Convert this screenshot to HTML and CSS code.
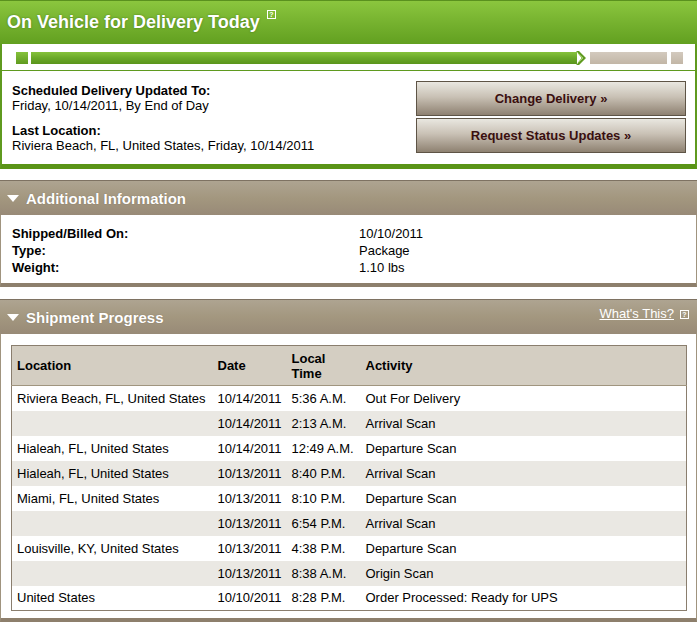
FILE: index.html
```html
<!DOCTYPE html>
<html>
<head>
<meta charset="utf-8">
<link rel="stylesheet" href="styles.css">
</head>
<body>
<div class="status">
  <div class="status-head">
    <h1 class="status-title">On Vehicle for Delivery Today</h1>
    <span class="qbox qbox-title">?</span>
  </div>
  <div class="progress">
    <span class="pg-sq pg-green"></span>
    <span class="pg-bar pg-done"></span>
    <svg class="pg-chev" width="14" height="14" viewBox="0 0 14 14">
      <path d="M0 0 L7 7 L0 14 L3 14 L10 7 L3 0 Z" fill="#5f9a1f"/>
      <path d="M5 0 L12 7 L5 14 L7 14 L14 7 L7 0 Z" fill="#ffffff"/>
      <path d="M2 2 L6 7 L2 12" fill="none" stroke="#86c23b" stroke-width="1"/>
    </svg>
    <span class="pg-bar pg-todo"></span>
    <span class="pg-sq pg-gray"></span>
  </div>
  <div class="status-body">
    <div class="status-info">
      <div class="lbl">Scheduled Delivery Updated To:</div>
      <div>Friday, 10/14/2011, By End of Day</div>
      <div class="lbl lbl-gap">Last Location:</div>
      <div>Riviera Beach, FL, United States, Friday, 10/14/2011</div>
    </div>
    <div class="status-actions">
      <button class="btn">Change Delivery »</button>
      <button class="btn">Request Status Updates »</button>
    </div>
  </div>
</div>

<div class="panel">
  <div class="panel-head">
    <span class="tri"></span>
    <span class="panel-title">Additional Information</span>
  </div>
  <div class="panel-body info-body">
    <div class="info-row"><span class="info-k">Shipped/Billed On:</span><span>10/10/2011</span></div>
    <div class="info-row"><span class="info-k">Type:</span><span>Package</span></div>
    <div class="info-row"><span class="info-k">Weight:</span><span>1.10 lbs</span></div>
  </div>
</div>

<div class="panel">
  <div class="panel-head">
    <span class="tri"></span>
    <span class="panel-title">Shipment Progress</span>
    <span class="whats"><a href="#" class="whats-link">What's This?</a><span class="qbox qbox-small">?</span></span>
  </div>
  <div class="panel-body prog-body">
    <table class="prog">
      <colgroup><col class="c1"><col class="c2"><col class="c3"><col class="c4"></colgroup>
      <thead>
        <tr><th>Location</th><th>Date</th><th>Local<br>Time</th><th>Activity</th></tr>
      </thead>
      <tbody>
        <tr><td>Riviera Beach, FL, United States</td><td>10/14/2011</td><td>5:36 A.M.</td><td>Out For Delivery</td></tr>
        <tr><td></td><td>10/14/2011</td><td>2:13 A.M.</td><td>Arrival Scan</td></tr>
        <tr><td>Hialeah, FL, United States</td><td>10/14/2011</td><td>12:49 A.M.</td><td>Departure Scan</td></tr>
        <tr><td>Hialeah, FL, United States</td><td>10/13/2011</td><td>8:40 P.M.</td><td>Arrival Scan</td></tr>
        <tr><td>Miami, FL, United States</td><td>10/13/2011</td><td>8:10 P.M.</td><td>Departure Scan</td></tr>
        <tr><td></td><td>10/13/2011</td><td>6:54 P.M.</td><td>Arrival Scan</td></tr>
        <tr><td>Louisville, KY, United States</td><td>10/13/2011</td><td>4:38 P.M.</td><td>Departure Scan</td></tr>
        <tr><td></td><td>10/13/2011</td><td>8:38 A.M.</td><td>Origin Scan</td></tr>
        <tr><td>United States</td><td>10/10/2011</td><td>8:28 P.M.</td><td>Order Processed: Ready for UPS</td></tr>
      </tbody>
    </table>
  </div>
</div>
</body>
</html>
```

FILE: styles.css
```css
* { box-sizing: border-box; }
html, body { margin: 0; padding: 0; background: #fff; }
body {
  font-family: "Liberation Sans", Arial, Helvetica, sans-serif;
  font-size: 13px;
  color: #000;
  width: 697px;
}

/* status panel */
.status {
  border-left: 2px solid #5f9a1f;
  border-right: 2px solid #5f9a1f;
  border-bottom: 5px solid #5a9417;
}
.status-head {
  height: 44px;
  margin: 0 -2px;
  padding: 0 0 0 7px;
  border-top: 1px solid #5a911e;
  background: linear-gradient(#8bc63e, #76b22f 50%, #62a020);
  display: flex;
  align-items: center;
}
.status-title {
  margin: 0;
  font-size: 18px;
  font-weight: bold;
  color: #fff;
  text-shadow: 0 0 2px rgba(40, 80, 10, 0.6);
  letter-spacing: 0;
}
.qbox {
  display: inline-flex;
  align-items: center;
  justify-content: center;
  border: 1px solid #fff;
  color: #fff;
  font-size: 7px;
  font-weight: bold;
  line-height: 1;
}
.qbox-title {
  width: 9px;
  height: 9px;
  margin: -17px 0 0 7px;
}
.progress {
  height: 27px;
  display: flex;
  align-items: center;
  padding: 2px 0 0 14px;
  border-bottom: 1px solid #5f9a1f;
}
.pg-sq { width: 12px; height: 12px; flex: none; }
.pg-green { background: linear-gradient(#86c23b, #5f9a1f); }
.pg-gray { background: linear-gradient(#d3cabe, #c2b6a6); margin-left: 4px; }
.pg-bar { height: 12px; }
.pg-done { width: 546px; margin-left: 3px; background: linear-gradient(#86c23b, #6aa828 50%, #5a951c); }
.pg-chev { flex: none; margin-left: -1px; }
.pg-todo { width: 77px; background: linear-gradient(#d3cabe, #c2b6a6); }

.status-body {
  display: flex;
  justify-content: space-between;
  padding: 10px 9px 11px 10px;
}
.status-info { line-height: 15px; padding-top: 2px; }
.lbl { font-weight: bold; }
.lbl-gap { margin-top: 10px; }
.status-actions {
  display: flex;
  flex-direction: column;
  gap: 2px;
}
.btn {
  width: 270px;
  height: 35px;
  border: 1px solid #5e5446;
  background: linear-gradient(#e9e7e0, #c9c1b5 45%, #8e8171);
  font-family: "Liberation Sans", Arial, sans-serif;
  font-size: 13px;
  font-weight: bold;
  color: #3a0f0f;
  padding: 0;
}

/* tan panels */
.panel {
  margin-top: 11px;
  border-left: 1px solid #a0947f;
  border-right: 1px solid #a0947f;
  border-bottom: 4px solid #8d7f6c;
}
.panel + .panel { margin-top: 12px; }
.panel-head {
  height: 35px;
  margin: 0 -1px;
  border-top: 1px solid #7e7262;
  background: linear-gradient(#aea491, #a3977f 50%, #988a77);
  display: flex;
  align-items: center;
  padding: 0 0 0 7px;
}
.tri {
  width: 0;
  height: 0;
  border-left: 6px solid transparent;
  border-right: 6px solid transparent;
  border-top: 7px solid #fff;
  margin-right: 7px;
}
.panel-title {
  color: #fff;
  font-size: 15px;
  font-weight: bold;
  text-shadow: 0 0 1px rgba(80, 60, 40, 0.5);
}
.whats {
  margin-left: auto;
  margin-right: 8px;
  margin-top: -8px;
  display: flex;
  align-items: center;
}
.whats-link {
  color: #fff;
  font-size: 13px;
  text-decoration: underline;
}
.qbox-small {
  width: 9px;
  height: 9px;
  margin-left: 6px;
  margin-top: 2px;
}
.info-body { padding: 10px 0 7px 11px; line-height: 17px; }
.info-row { display: flex; }
.info-k { font-weight: bold; width: 347px; }

.prog-body { padding: 11px 9px 7px 10px; }
.prog {
  width: 100%;
  border-collapse: collapse;
  table-layout: fixed;
  border: 1px solid #8a7e6e;
}
.c1 { width: 201px; }
.c2 { width: 74px; }
.c3 { width: 74px; }
.prog th {
  background: #d4cec2;
  text-align: left;
  font-weight: bold;
  height: 40px;
  padding: 0 5px;
  line-height: 15px;
  border-bottom: 1px solid #a0957f;
}
.prog td {
  height: 25px;
  padding: 0 5px;
  white-space: nowrap;
}
.prog tbody tr:nth-child(even) td { background: #eae8e3; }
```
